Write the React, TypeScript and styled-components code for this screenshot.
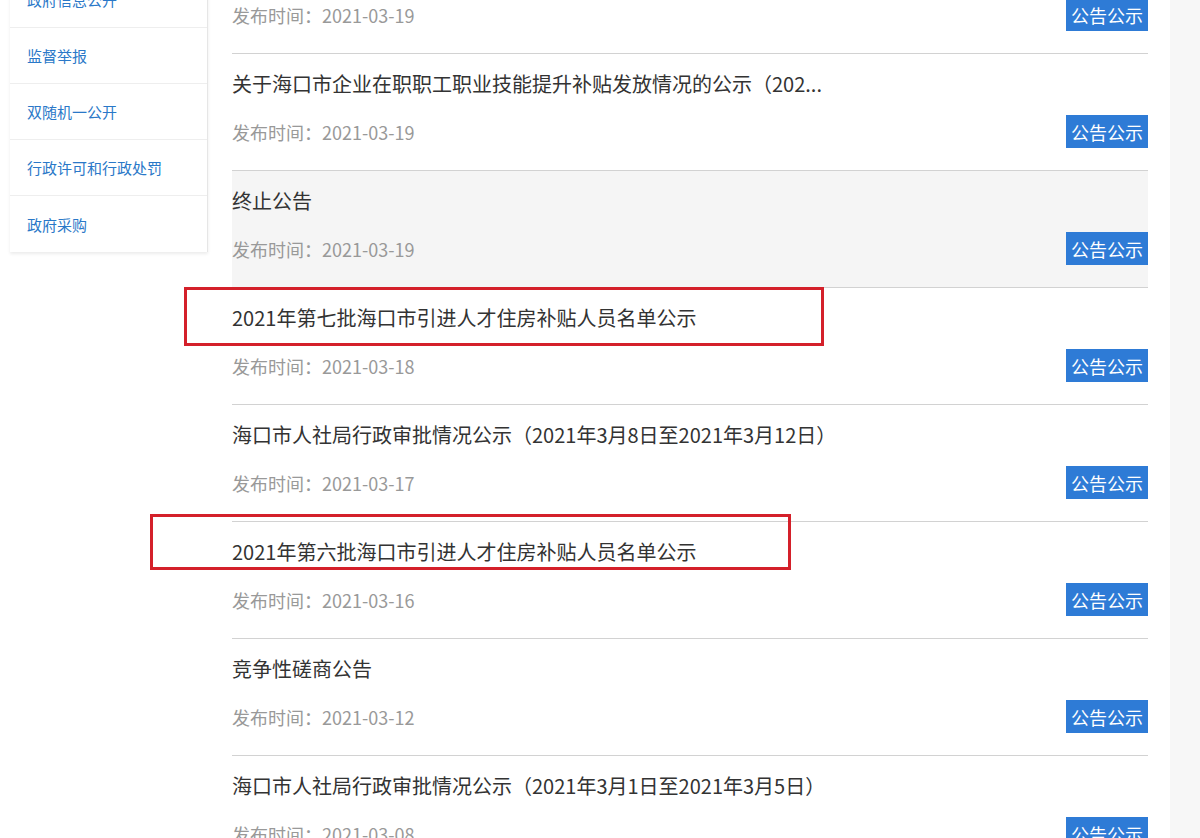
import React from "react";
import styled, { createGlobalStyle } from "styled-components";

const GlobalStyle = createGlobalStyle`
  html, body {
    margin: 0;
    padding: 0;
    height: 838px;
    overflow: hidden;
    background: #f7f7f7;
    font-family: "Noto Sans CJK SC", "Noto Sans", sans-serif;
  }
`;

const sideLinks = [
  "政府信息公开",
  "监督举报",
  "双随机一公开",
  "行政许可和行政处罚",
  "政府采购",
];

type Notice = { title: string; date: string; active?: boolean };

const notices: Notice[] = [
  { title: "关于2021年海口市职业技能提升补贴发放情况的公示", date: "2021-03-19" },
  { title: "关于海口市企业在职职工职业技能提升补贴发放情况的公示（202...", date: "2021-03-19" },
  { title: "终止公告", date: "2021-03-19", active: true },
  { title: "2021年第七批海口市引进人才住房补贴人员名单公示", date: "2021-03-18" },
  { title: "海口市人社局行政审批情况公示（2021年3月8日至2021年3月12日）", date: "2021-03-17" },
  { title: "2021年第六批海口市引进人才住房补贴人员名单公示", date: "2021-03-16" },
  { title: "竞争性磋商公告", date: "2021-03-12" },
  { title: "海口市人社局行政审批情况公示（2021年3月1日至2021年3月5日）", date: "2021-03-08" },
];

// red annotation frames drawn over the page
const marks = [
  { left: 184, top: 287, width: 640, height: 59 },
  { left: 150, top: 514, width: 641, height: 56 },
];

const App: React.FC = () => {
  return (
    <Viewport>
      <GlobalStyle />
      <Page>
        <Sidebar>
          {sideLinks.map((s) => (
            <SideItem key={s}>{s}</SideItem>
          ))}
        </Sidebar>
        <List>
          {notices.map((n, i) => (
            <Row key={i} $active={n.active}>
              <Title>{n.title}</Title>
              <Meta>
                <DateText>发布时间：{n.date}</DateText>
                <Tag>公告公示</Tag>
              </Meta>
            </Row>
          ))}
        </List>
      </Page>
      {marks.map((m, i) => (
        <Mark
          key={i}
          style={{ left: m.left, top: m.top, width: m.width, height: m.height }}
        />
      ))}
    </Viewport>
  );
};

export default App;

const Viewport = styled.div`
  position: relative;
  height: 838px;
  overflow: hidden;
`;

const Page = styled.div`
  display: flex;
  align-items: flex-start;
  width: 1170px;
  height: 1000px;
  margin-top: -63px; /* page is scrolled down a bit */
  background: #fff;
`;

const Sidebar = styled.ul`
  list-style: none;
  margin: 35px 0 0 10px;
  padding: 0;
  width: 197px;
  background: #fff;
  border-right: 1px solid #e6e6e6;
  box-shadow: 0 2px 3px rgba(0, 0, 0, 0.08);
`;

const SideItem = styled.li`
  display: flex;
  align-items: center;
  height: 55px;
  padding-left: 17px;
  border-bottom: 1px solid #eeeeee;
  font-size: 15px;
  color: #2a78c8;

  &:last-child {
    border-bottom: none;
    height: 56px;
  }
`;

const List = styled.div`
  width: 916px;
  margin-left: 24px;
`;

const Row = styled.div<{ $active?: boolean }>`
  display: flex;
  flex-direction: column;
  padding: 18px 0 22px;
  border-bottom: 1px solid #d2d2d2;
  background: ${(p) => (p.$active ? "#f5f5f5" : "#fff")};
`;

const Title = styled.div`
  height: 24px;
  line-height: 24px;
  font-size: 20px;
  color: #333;
  white-space: nowrap;
`;

const Meta = styled.div`
  display: flex;
  align-items: center;
  justify-content: space-between;
  height: 33px;
  margin-top: 19px;
`;

const DateText = styled.span`
  font-size: 18px;
  color: #999;
`;

const Tag = styled.span`
  display: flex;
  align-items: center;
  justify-content: center;
  width: 82px;
  height: 33px;
  background: #2e7bd6;
  color: #fff;
  font-size: 18px;
`;

const Mark = styled.div`
  position: absolute;
  box-sizing: border-box;
  border: 3px solid #d4202a;
  pointer-events: none;
`;
